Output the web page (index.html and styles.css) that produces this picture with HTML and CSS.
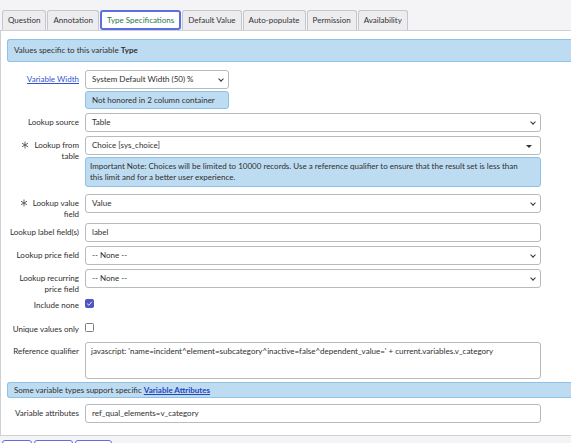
FILE: index.html
```html
<!DOCTYPE html>
<html lang="en">
<head>
  <meta charset="UTF-8" />
  <title>Variable - Type Specifications</title>
  <link rel="stylesheet" href="styles.css">
</head>
<body>
  <ul class="tabs">
    <li class="tab">Question</li>
    <li class="tab">Annotation</li>
    <li class="tab active">Type Specifications</li>
    <li class="tab">Default Value</li>
    <li class="tab">Auto-populate</li>
    <li class="tab">Permission</li>
    <li class="tab">Availability</li>
  </ul>

  <div class="panel">
    <div class="section-bar header-bar">Values specific to this variable <b>Type</b></div>

    <div class="form-row first">
      <label class="field-label"><a href="#">Variable Width</a></label>
      <div class="field">
        <div class="select narrow">System Default Width (50) %<span class="chevron"></span></div>
        <div class="note narrow">Not honored in 2 column container</div>
      </div>
    </div>

    <div class="form-row">
      <label class="field-label">Lookup source</label>
      <div class="field">
        <div class="select">Table<span class="chevron"></span></div>
      </div>
    </div>

    <div class="form-row">
      <label class="field-label"><svg class="req" viewBox="0 0 8 8"><path d="M4 0.5V7.5M1 2.25L7 5.75M7 2.25L1 5.75" stroke="#555" stroke-width="0.9"/></svg>Lookup from table</label>
      <div class="field">
        <div class="select">Choice [sys_choice]<span class="caret"></span></div>
        <div class="note wide">Important Note: Choices will be limited to 10000 records. Use a reference qualifier to ensure that the result set is less than this limit and for a better user experience.</div>
      </div>
    </div>

    <div class="form-row">
      <label class="field-label"><svg class="req" viewBox="0 0 8 8"><path d="M4 0.5V7.5M1 2.25L7 5.75M7 2.25L1 5.75" stroke="#555" stroke-width="0.9"/></svg>Lookup value field</label>
      <div class="field">
        <div class="select">Value<span class="chevron"></span></div>
      </div>
    </div>

    <div class="form-row">
      <label class="field-label">Lookup label field(s)</label>
      <div class="field">
        <div class="input">label</div>
      </div>
    </div>

    <div class="form-row">
      <label class="field-label">Lookup price field</label>
      <div class="field">
        <div class="select">-- None --<span class="chevron"></span></div>
      </div>
    </div>

    <div class="form-row">
      <label class="field-label">Lookup recurring price field</label>
      <div class="field">
        <div class="select">-- None --<span class="chevron"></span></div>
      </div>
    </div>

    <div class="form-row check-row">
      <label class="field-label">Include none</label>
      <div class="field">
        <span class="checkbox checked">
          <svg width="7" height="7" viewBox="0 0 7 7"><path d="M1.2 3.7 L2.8 5.2 L5.9 1.8" fill="none" stroke="#fff" stroke-width="0.9"/></svg>
        </span>
      </div>
    </div>

    <div class="form-row check-row">
      <label class="field-label">Unique values only</label>
      <div class="field">
        <span class="checkbox"></span>
      </div>
    </div>

    <div class="form-row tight">
      <label class="field-label">Reference qualifier</label>
      <div class="field">
        <div class="textarea">javascript: 'name=incident^element=subcategory^inactive=false^dependent_value=' + current.variables.v_category</div>
      </div>
    </div>

    <div class="section-bar attr-bar">Some variable types support specific <a href="#">Variable Attributes</a></div>

    <div class="form-row last">
      <label class="field-label">Variable attributes</label>
      <div class="field">
        <div class="input">ref_qual_elements=v_category</div>
      </div>
    </div>
  </div>

  <div class="actions">
    <button class="action-btn w30"></button>
    <button class="action-btn w39"></button>
    <button class="action-btn w37"></button>
  </div>
</body>
</html>
```

FILE: styles.css
```css
body {
  margin: 0;
  background: #f4f4f6;
  font-family: 'Lato', 'Open Sans', Arial, sans-serif;
  font-size: 8px;
  color: #2e2e2e;
  overflow: hidden;
  width: 571px;
  height: 443px;
}

.tabs {
  list-style: none;
  margin: 0;
  padding: 10px 0 0 2px;
  display: flex;
  height: 20px;
}

.tab {
  box-sizing: border-box;
  height: 20px;
  padding: 0 5px;
  line-height: 19px;
  background: #ededf0;
  border: 1px solid #c6c6cb;
  border-bottom: none;
  border-radius: 3px 3px 0 0;
  margin-right: 1px;
  color: #333;
  white-space: nowrap;
}

.tab.active {
  background: #fff;
  border: 2px solid #5b6fe3;
  border-radius: 3px;
  line-height: 16px;
  color: #2c7551;
  padding: 0 5px;
  position: relative;
  z-index: 1;
}

.panel {
  box-sizing: border-box;
  width: 590px;
  background: #fff;
  border-top: 1px solid #cfd0d4;
  border-left: 1px solid #cfd0d4;
  border-bottom: 1px solid #cfd0d4;
  padding: 8px 0 12px 0;
}

.section-bar {
  margin-left: 6px;
  background: #bedcf1;
  border: 1px solid #8fc0e5;
  border-right: none;
  border-radius: 3px 0 0 3px;
  padding-left: 6px;
  box-sizing: border-box;
}

.header-bar {
  height: 23px;
  line-height: 21px;
}

.attr-bar {
  height: 16px;
  line-height: 14px;
  margin-top: 3px;
}

.section-bar a,
.field-label a {
  color: #3354d1;
  text-decoration: underline;
}

.section-bar a {
  font-weight: bold;
  color: #2645bd;
}

.form-row {
  display: grid;
  grid-template-columns: 78px 456px;
  column-gap: 6px;
  margin-top: 4px;
}

.form-row.first {
  margin-top: 8px;
}

.form-row.tight {
  margin-top: 0;
}

.form-row.last {
  margin-top: 6px;
}

.field-label {
  text-align: right;
  padding: 4px 0 0 7px;
  line-height: 10.5px;
  color: #2e2e2e;
}

.req {
  width: 8px;
  height: 8px;
  margin-right: 5px;
  vertical-align: -1px;
}

.field {
  display: flex;
  flex-direction: column;
  gap: 2px;
}

.select,
.input,
.textarea {
  box-sizing: border-box;
  height: 19px;
  line-height: 17px;
  padding: 0 6px;
  border: 1px solid #b9babe;
  border-radius: 3px;
  background: #fff;
  color: #2e2e2e;
  position: relative;
  white-space: nowrap;
}

.textarea {
  height: 37px;
  line-height: 11px;
  padding-top: 3px;
  padding-left: 5px;
}

.narrow {
  width: 144px;
}

.chevron {
  position: absolute;
  right: 5px;
  top: 6px;
  width: 3px;
  height: 3px;
  border-right: 1.3px solid #333;
  border-bottom: 1.3px solid #333;
  transform: rotate(45deg);
}

.caret {
  position: absolute;
  right: 8px;
  top: 8px;
  border-left: 3px solid transparent;
  border-right: 3px solid transparent;
  border-top: 3.5px solid #333;
}

.note {
  box-sizing: border-box;
  background: #bedcf1;
  border: 1px solid #8fc0e5;
  border-radius: 3px;
  padding: 3px 14px 3px 4px;
  line-height: 11px;
  min-height: 18px;
}

.note.wide {
  margin-bottom: 3px;
}

.note.narrow {
  padding: 0 6px;
  line-height: 16px;
  white-space: nowrap;
}

.check-row {
  height: 20px;
}

.check-row .field-label {
  padding-top: 2px;
}

.check-row .field {
  padding-top: 1px;
}

.checkbox {
  box-sizing: border-box;
  width: 9px;
  height: 9px;
  border: 1px solid #7c7c82;
  border-radius: 1.5px;
  background: #fff;
  display: flex;
  align-items: center;
  justify-content: center;
}

.checkbox.checked {
  background: #5055c4;
  border-color: #5055c4;
}

.actions {
  display: flex;
  gap: 2px;
  padding: 4px 0 0 2px;
}

.action-btn {
  height: 14px;
  background: #fff;
  border: 1px solid #5b6fe3;
  border-radius: 3px;
  padding: 0;
}

.w30 { width: 30px; }
.w39 { width: 39px; }
.w37 { width: 37px; }
```
